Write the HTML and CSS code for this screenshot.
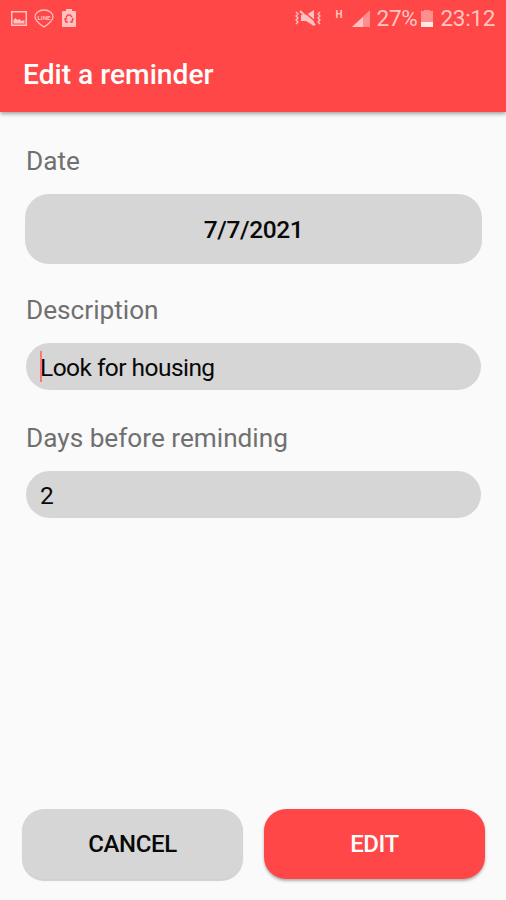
FILE: index.html
```html
<!DOCTYPE html>
<html lang="en">
<head>
    <meta charset="UTF-8">
    <meta name="viewport" content="width=device-width, initial-scale=1.0">
    <title>Edit a reminder</title>
    <link rel="stylesheet" href="styles.css">
</head>
<body>
    <header class="app-header">
        <div class="status-bar">
            <div class="status-group">
                <svg class="icon-picture" width="16" height="15" viewBox="0 0 16 15">
                    <path fill-rule="evenodd" d="M0 0h16v15H0z M1.5 1.5v12h13v-12z"/>
                    <path d="M2.500 12.500V9l2-2 2 2 2-1 2 2 3-1v3.500z"/>
                </svg>
                <svg class="icon-chat" width="20" height="19" viewBox="0 0 20 19">
                    <path class="line" d="M10 1c5 0 9 3 9 7 0 3-3 6-9 10-6-4-9-7-9-10 0-4 4-7 9-7z"/>
                    <text x="10" y="10.500" text-anchor="middle" textLength="13" lengthAdjust="spacingAndGlyphs">LINE</text>
                </svg>
                <svg class="icon-recycle" width="14" height="18" viewBox="0 0 14 18">
                    <path d="M4 0h6v2h3q1 0 1 1v14q0 1-1 1H1q-1 0-1-1V3q0-1 1-1h3z"/>
                    <path class="cutout" d="M4 8l2-2h2l2 2M11 9l-1 4H8M6 13H4l-1-3 2-1"/>
                </svg>
            </div>
            <div class="status-group">
                <svg class="icon-mute" width="26" height="17" viewBox="0 0 26 17">
                    <path d="M6 5h5l8-5v16l-8-5H6z"/>
                    <path class="cutout" d="M7 0l15 13"/>
                    <path class="line thick" d="M5 1l15 14"/>
                    <path class="line" d="M1 2l2 2-2 2 2 2-2 2 2 2-2 2M25 2l-2 2 2 2-2 2 2 2-2 2 2 2"/>
                </svg>
                <span class="network">H</span>
                <svg class="icon-signal" width="18" height="17" viewBox="0 0 18 17">
                    <path class="faded" d="M0 17L18 0v17z"/>
                    <path d="M0 17L11 7v10z"/>
                </svg>
                <span class="percent">27%</span>
                <svg class="icon-battery" width="12" height="17" viewBox="0 0 12 17">
                    <path class="faded" d="M3 0h6v1h3v11H0V1h3z"/>
                    <path class="level" d="M0 12h12v5H0z"/>
                </svg>
                <span class="clock">23:12</span>
            </div>
        </div>
        <h1 class="title">Edit a reminder</h1>
    </header>

    <main class="form">
        <div class="label">Date</div>
        <button class="date-button">7/7/2021</button>
        <label class="label" for="description">Description</label>
        <div class="field focused">
            <input id="description" type="text" value="Look for housing">
        </div>
        <label class="label" for="days">Days before reminding</label>
        <div class="field">
            <input id="days" type="text" value="2">
        </div>
    </main>

    <footer class="actions">
        <button class="cancel">CANCEL</button>
        <button class="edit">EDIT</button>
    </footer>
</body>
</html>
```
FILE: styles.css
```css
* {
    box-sizing: border-box;
}

body {
    font-family: Roboto, sans-serif;
    margin: 0;
    height: 100vh;
    display: flex;
    flex-direction: column;
    background: #fafafa;
    color: #080808;
}

button, input {
    font-family: inherit;
    color: inherit;
    border: none;
    padding: 0;
}

.app-header {
    height: 112px;
    background: #ff4747;
    color: #fff;
    box-shadow: 0 2px 4px rgba(0, 0, 0, 0.35);
}

.status-bar {
    height: 36px;
    padding: 0 11px;
    display: flex;
    justify-content: space-between;
    align-items: center;
    color: #ffc6c6;
    font-size: 22.5px;
}
.status-group {
    display: flex;
    align-items: center;
}
.status-bar svg {
    fill: #ffc2c2;
    display: block;
}
.status-bar .line {
    fill: none;
    stroke: #ffc2c2;
    stroke-width: 1.3;
}
.status-bar .thick {
    stroke-width: 2;
}
.status-bar .cutout {
    fill: none;
    stroke: #ff4747;
    stroke-width: 1.6;
}
.status-bar .faded {
    fill: #ff8e8e;
}
.status-bar .level {
    fill: #ffe8e8;
}
.icon-chat {
    margin: 0 8px 0 7px;
}
.icon-chat text {
    font-size: 6px;
    font-weight: 700;
}
.network {
    font-size: 10px;
    font-weight: 700;
    margin: -8px 9px 0 15px;
}
.percent {
    margin: 0 4px 0 7px;
    letter-spacing: -0.3px;
}
.clock {
    margin-left: 7px;
    letter-spacing: -0.3px;
}

.title {
    margin: 0;
    padding-left: 23px;
    font-size: 28.2px;
    font-weight: 500;
    line-height: 77px;
}

.form {
    flex: 1;
    display: flex;
    flex-direction: column;
    padding: 33px 24px 0 25px;
}

.label {
    color: #707070;
    font-size: 26.2px;
    line-height: 32px;
    padding-left: 1px;
}

.date-button {
    height: 70px;
    margin: 17px 0 30px;
    border-radius: 24px;
    background: #d6d6d6;
    font-size: 24.5px;
    font-weight: 500;
    letter-spacing: -0.4px;
}

.field {
    height: 47px;
    margin: 17px 1px 32px;
    padding: 2px 0 0 14px;
    display: flex;
    align-items: center;
    position: relative;
    border-radius: 24px;
    background: #d6d6d6;
}
.field input {
    width: 100%;
    background: none;
    outline: none;
    font-size: 24.5px;
    letter-spacing: -0.55px;
}
/* text cursor */
.focused::before {
    content: "";
    position: absolute;
    left: 14px;
    top: 8px;
    width: 2px;
    height: 31px;
    background: #ff7474;
}

.actions {
    display: flex;
    gap: 21px;
    padding: 0 21px 21px 22px;
}
.actions button {
    flex: 1;
    height: 70px;
    border-radius: 22px;
    font-size: 24px;
    font-weight: 500;
    letter-spacing: -0.4px;
}
.actions .cancel {
    background: #d6d6d6;
    box-shadow: 0 2px 1px #d0d0d0;
}
.actions .edit {
    background: #ff4747;
    color: #fff;
    box-shadow: 0 2px 3px rgba(0, 0, 0, 0.3);
}
```
